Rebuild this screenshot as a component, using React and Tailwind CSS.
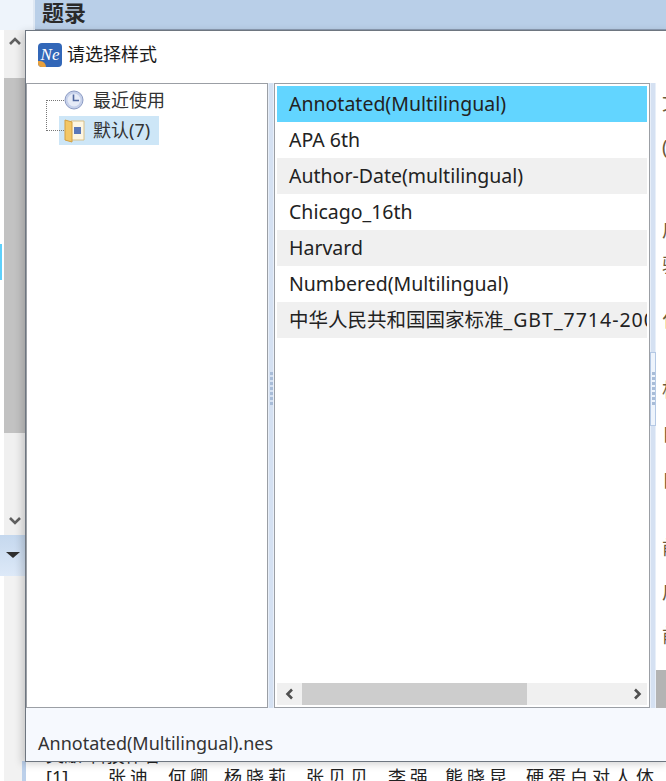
const font = { fontFamily: '"Noto Sans", "Noto Sans CJK SC", sans-serif' };

const styles = [
  ['Annotated(Multilingual)'],
  ['APA 6th'],
  ['Author-Date(multilingual)'],
  ['Chicago_16th'],
  ['Harvard'],
  ['Numbered(Multilingual)'],
  ['中华人民共和国国家标准', '_GBT_7714-2005'],
];

const sideGlyphs = [
  ['文', 'h-[44px]'], ['(', 'h-[83px]'], ['启', 'h-[35px]'], ['驶', 'h-[55px]'], ['化', 'h-[70px]'],
  ['相', 'h-[44px]'], ['自', 'h-[46px]'], ['自', 'h-[68px]'], ['前', 'h-[44px]'], ['启', 'h-[44px]'], ['前', 'h-[26px]'],
];

const authors = [
  ['张迪', 'w-[60px]'], ['何卿', 'w-[56px]'], ['杨晓莉', 'w-[82px]'], ['张贝贝', 'w-[82px]'],
  ['李强', 'w-[57px]'], ['熊晓昆', 'w-[81px]'], ['硬蛋白对人体', 'w-[140px]'],
];

const Chevron = ({ d, className }) => (
  <svg viewBox="0 0 12 12" className={className} fill="none" stroke="currentColor" strokeWidth="2.6">
    <path d={d} />
  </svg>
);

const Grip = () => (
  <div className="flex flex-col gap-[2px]">
    {[0, 1, 2, 3, 4, 5, 6].map(i => <div key={i} className="w-[3px] h-[3px] bg-[#a8bcd8]" />)}
  </div>
);

const Splitter = ({ framed }) => (
  <div className="w-[6px] bg-[#d5e1f2] border-x border-[#e8eff9] flex flex-col items-center justify-center pb-[14px]">
    {framed ? (
      <div className="h-[74px] w-[6px] bg-[#eef4fc] border border-[#b4c8e4] flex items-center justify-center">
        <Grip />
      </div>
    ) : (
      <Grip />
    )}
  </div>
);

const NeLogo = () => (
  <div className="relative w-[24px] h-[24px] rounded-[4px] bg-[#3267b8] overflow-hidden flex items-center justify-center">
    <span className="text-white italic text-[17px] leading-none font-['Liberation_Serif',serif]">Ne</span>
    <div className="absolute left-0 bottom-0 w-[8px] h-[6px] bg-[#e8a03c] rounded-tr-[6px]" />
  </div>
);

const ClockIcon = () => (
  <svg viewBox="0 0 20 20" className="w-[20px] h-[20px]">
    <circle cx="10" cy="10" r="9" fill="#c5d0ea" stroke="#8d9cc4" />
    <circle cx="10" cy="10" r="6.5" fill="#e6ebf7" />
    <path d="M9.5 4.5V10.5H15" fill="none" stroke="#51689f" strokeWidth="1.6" />
  </svg>
);

const FolderIcon = () => (
  <svg viewBox="0 0 22 26" className="w-[22px] h-[26px]">
    <path d="M7 3H20V22H7Z" fill="#fdf6e2" stroke="#d8c08a" />
    <rect x="10" y="9" width="7" height="7" fill="#5b78b8" />
    <path d="M1 2L8 4V24L1 22Z" fill="#f3c766" stroke="#d39f3f" />
  </svg>
);

export default function App() {
  return (
    <div style={font} className="relative w-[666px] h-[781px] overflow-hidden bg-white text-[#222]">
      {/* page behind the dialog */}
      <div className="flex h-[30px]">
        <div className="w-[33px] bg-[#eef4fb]" />
        <div className="w-[2px] bg-[#dfe8f3]" />
        <div className="flex-1 bg-[#b9cfe8] border-b border-[#8d9db3] pl-[7px]">
          <span className="block text-[22px] leading-[24px] font-bold text-[#2a2a2a]">题录</span>
        </div>
      </div>
      <div className="flex h-[751px]">
        <div className="w-[4px] flex flex-col bg-white pt-[214px]">
          <div className="w-[2px] h-[36px] bg-[#5ed0fb]" />
        </div>
        <div className="w-[22px] flex flex-col">
          <div className="h-[48px] bg-[#f0f0f0] flex justify-center pt-[5px]">
            <Chevron d="M1 9L6 4L11 9" className="w-[12px] h-[12px] text-[#606060]" />
          </div>
          <div className="h-[355px] bg-[#c2c2c2]" />
          <div className="h-[102px] bg-[#f0f0f0] flex justify-center items-end pb-[8px]">
            <Chevron d="M1 3L6 8L11 3" className="w-[12px] h-[12px] text-[#606060]" />
          </div>
          <div className="h-[41px] -ml-[4px] w-[26px] bg-gradient-to-b from-[#c5d8ee] to-[#dde9f8] flex justify-center pt-[17px]">
            <div className="w-0 h-0 border-x-[7px] border-x-transparent border-t-[6px] border-t-[#2e2e2e]" />
          </div>
          <div className="flex-1 bg-[#f2f2f2]" />
        </div>
        <div className="w-[4px]" />
        <div className="flex-1" />
      </div>

      {/* text peeking out under the dialog */}
      <div className="absolute left-[22px] top-[761px] w-[4px] h-[20px] bg-[#bcd0ea]" />
      <div className="absolute left-[26px] top-[744px] w-[640px] h-[37px] overflow-hidden pl-[20px] text-[18px] leading-[22px] text-[#222] whitespace-nowrap">
        <div>文献/科技作者</div>
        <div className="flex">
          <span className="w-[62px]">[1]</span>
          {authors.map(([a, w]) => (
            <span key={a} className={`${w} shrink-0 tracking-[4px]`}>{a}</span>
          ))}
        </div>
      </div>

      {/* style picker dialog */}
      <div className="absolute left-[25px] top-[30px] w-[645px] h-[732px] bg-[#f6f9fe] border border-[#6e7680] shadow-[-3px_2px_8px_rgba(0,0,0,0.18)] flex flex-col">
        <div className="h-[52px] bg-white flex items-center gap-[5px] pl-[12px] pb-[5px]">
          <NeLogo />
          <span className="text-[18px] text-[#1a1a1a]">请选择样式</span>
        </div>
        <div className="h-[625px] flex">
          <div className="w-[242px] bg-white border border-[#9b9fa5] relative">
            <div className="absolute left-[19px] top-[16px] w-[18px] h-[31px] border-l border-b border-dotted border-[#777]" />
            <div className="absolute left-[19px] top-[16px] w-[18px] border-t border-dotted border-[#777]" />
            <div className="pl-[32px] pt-[2px] flex flex-col text-[18px] text-[#333]">
              <div className="flex items-center h-[30px] gap-[9px] pl-[5px] pb-[2px]">
                <ClockIcon />
                <span>最近使用</span>
              </div>
              <div className="flex items-center h-[29px] w-[100px] bg-[#cde6f7] pl-[5px] gap-[7px]">
                <FolderIcon />
                <span className="whitespace-nowrap">默认(7)</span>
              </div>
            </div>
          </div>
          <Splitter />
          <div className="w-[376px] bg-white border border-[#9b9fa5] p-[2px] flex flex-col">
            <div className="flex-1 min-h-0 overflow-hidden flex flex-col">
              {styles.map(([s, tail], i) => (
                <div
                  key={s}
                  className={`h-[36px] shrink-0 pl-[12px] text-[19.5px] leading-[36px] whitespace-nowrap overflow-hidden ${i === 0 ? 'bg-[#62d5ff]' : i % 2 === 0 ? 'bg-[#f0f0f0]' : 'bg-white'}`}
                >
                  {s}
                  {tail && <span className="tracking-[1px]">{tail}</span>}
                </div>
              ))}
            </div>
            <div className="h-[22px] bg-[#f0f0f0] flex items-center shrink-0">
              <div className="w-[25px] flex justify-center">
                <Chevron d="M8 1.5L3.5 6L8 10.5" className="w-[12px] h-[12px] text-[#505050]" />
              </div>
              <div className="w-[225px] h-full bg-[#cdcdcd]" />
              <div className="flex-1 flex justify-end pr-[4px]">
                <Chevron d="M4 1.5L8.5 6L4 10.5" className="w-[12px] h-[12px] text-[#505050]" />
              </div>
            </div>
          </div>
          <Splitter framed />
          <div className="flex-1 bg-white pt-[8px] pl-[6px] overflow-hidden flex flex-col text-[19px] leading-[24px] text-[#6b5a3a]">
            {sideGlyphs.map(([g, h], i) => <div key={i} className={`${h} shrink-0 whitespace-nowrap`}>{g}</div>)}
            <div className="mt-auto h-[38px] -ml-[6px] bg-[#b4b4b4] shrink-0" />
          </div>
        </div>
        <div className="flex-1 pl-[12px] pt-[24px] text-[18px] leading-[22px] text-[#333]">
          Annotated(Multilingual).nes
        </div>
      </div>
    </div>
  );
}
